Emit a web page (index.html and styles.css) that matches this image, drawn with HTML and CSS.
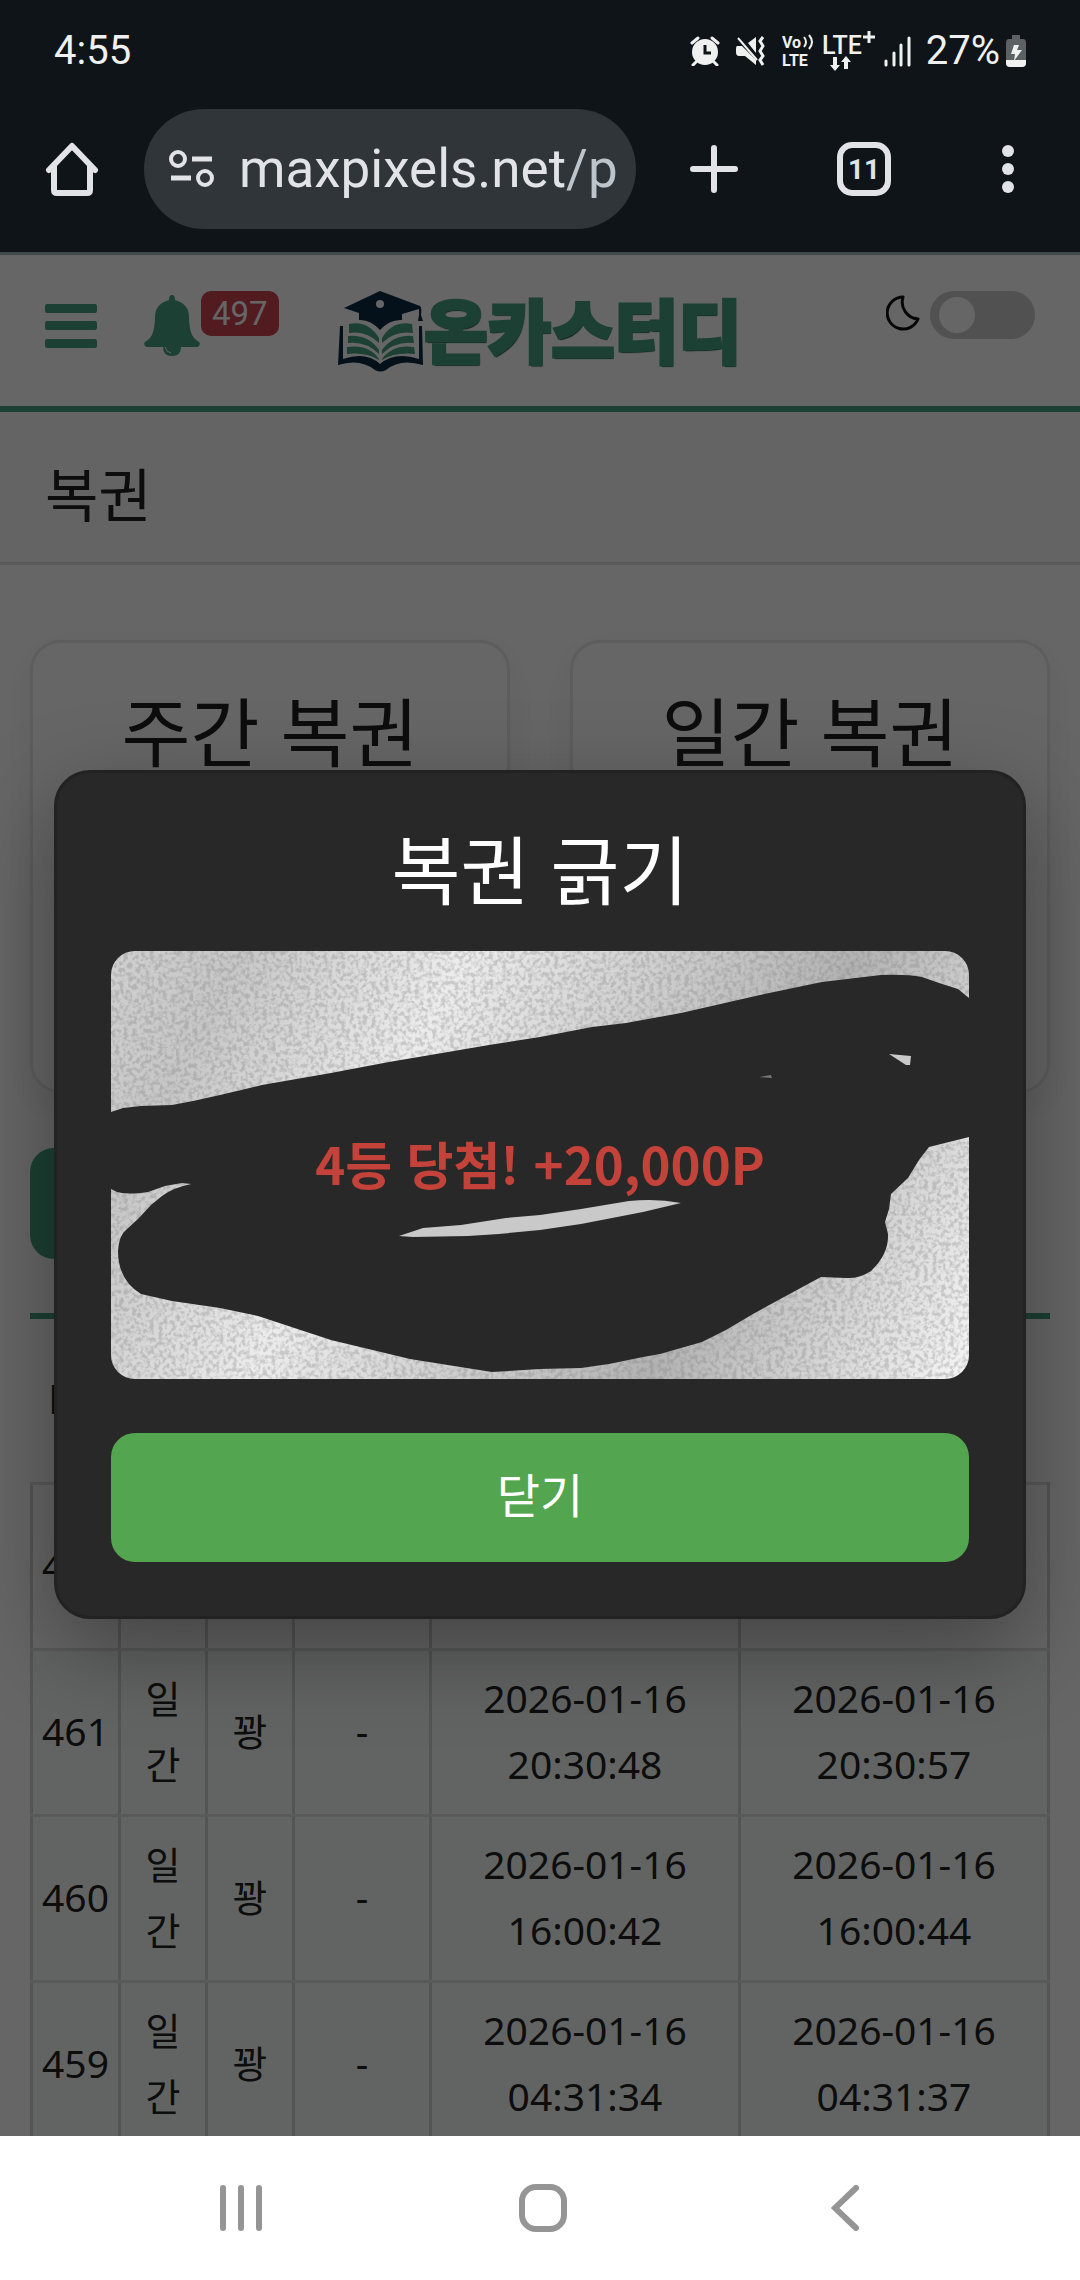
FILE: index.html
```html
<!DOCTYPE html>
<html lang="ko">
<head>
  <meta charset="UTF-8">
  <meta name="viewport" content="width=device-width, initial-scale=1.0">
  <title>복권</title>
  <link rel="stylesheet" href="styles.css">
</head>
<body>
  <div class="statusbar">
    <span class="clock">4:55</span>
    <div class="status-icons">
      <svg class="alarm" width="30" height="30" viewBox="0 0 30 30">
        <circle cx="15" cy="16" r="13" fill="#eff1f0"/>
        <path d="M2 7 L8 2 M28 7 L22 2 M6 26 L3 29 M24 26 L27 29" stroke="#eff1f0" stroke-width="3" stroke-linecap="round"/>
        <path d="M15 9 V17 H21" fill="none" stroke="#0f1418" stroke-width="3"/>
      </svg>
      <svg class="mute" width="32" height="30" viewBox="0 0 32 30">
        <path d="M21 1 V17 L13 7 Z M2 10 H7 L21 24 V29 L10 20 H4 Q1 20 1 16 V13 Q1 10 2 10 Z" fill="#eff1f0"/>
        <path d="M3 2 L22 24" stroke="#eff1f0" stroke-width="2"/>
        <path d="M28 1 L25 5 L28 10 L25 15 L28 20 L25 24 L28 29" fill="none" stroke="#eff1f0" stroke-width="3"/>
      </svg>
      <svg class="volte" width="34" height="36" viewBox="0 0 34 36">
        <text x="0" y="15">Vo</text>
        <text x="0" y="33">LTE</text>
        <path d="M22 4 Q26 9 22 14 M27 2 Q33 9 27 16" fill="none" stroke="#eff1f0" stroke-width="2"/>
      </svg>
      <svg class="lte" width="56" height="44" viewBox="0 0 56 44">
        <text x="0" y="25">LTE</text>
        <path d="M47 2 V14 M41 8 H53" stroke="#eff1f0" stroke-width="3"/>
        <path d="M11 28 H15 V36 H18 L13 42 L8 36 H11 Z M22 40 H26 V33 H29 L24 27 L19 33 H22 Z" fill="#eff1f0"/>
      </svg>
      <svg class="signal" width="28" height="32" viewBox="0 0 28 32">
        <path d="M2 26 V30 M10 18 V30 M17 10 V30 M25 3 V30" stroke="#eff1f0" stroke-width="3" stroke-linecap="round"/>
      </svg>
      <span class="percent">27%</span>
      <svg class="battery" width="20" height="32" viewBox="0 0 20 32">
        <path d="M6 0 H14 V4 H17 Q20 4 20 8 V28 Q20 32 16 32 H4 Q0 32 0 28 V8 Q0 4 3 4 H6 Z" fill="#5d6164"/>
        <path d="M0 25 H20 V28 Q20 32 16 32 H4 Q0 32 0 28 Z" fill="#eff1f0"/>
        <path d="M8 10 H13 L11 15 H16 L8 26 L9 19 H5 Z" fill="#eff1f0"/>
      </svg>
    </div>
  </div>

  <div class="toolbar">
    <button class="tool" aria-label="홈">
      <svg width="54" height="54" viewBox="0 0 54 54">
        <path d="M4 28 L27 4 L50 28 M9 24 V48 Q9 51 12 51 H42 Q45 51 45 48 V24" fill="none" stroke="#e1e3e6" stroke-width="6" stroke-linecap="round" stroke-linejoin="round"/>
      </svg>
    </button>
    <button class="address">
      <svg width="46" height="40" viewBox="0 0 46 40">
        <circle cx="9" cy="10" r="7" fill="none" stroke="#e1e3e6" stroke-width="4"/>
        <circle cx="36" cy="29" r="7" fill="none" stroke="#e1e3e6" stroke-width="4"/>
        <path d="M23 10 H43 M2 29 H22" stroke="#e1e3e6" stroke-width="5"/>
      </svg>
      <span class="url">maxpixels.net<span class="path">/p</span></span>
    </button>
    <button class="tool plus" aria-label="새 탭">
      <svg width="48" height="48" viewBox="0 0 48 48">
        <path d="M24 3 V45 M3 24 H45" stroke="#e1e3e6" stroke-width="6" stroke-linecap="round"/>
      </svg>
    </button>
    <button class="tool tabs">11</button>
    <button class="tool more" aria-label="메뉴">
      <svg width="12" height="48" viewBox="0 0 12 48">
        <circle cx="6" cy="6" r="6" fill="#e1e3e6"/>
        <circle cx="6" cy="24" r="6" fill="#e1e3e6"/>
        <circle cx="6" cy="42" r="6" fill="#e1e3e6"/>
      </svg>
    </button>
  </div>

  <div class="webview">
    <header class="header">
      <div class="header-left">
        <button class="icon-btn menu-btn" aria-label="메뉴 열기">
          <svg width="52" height="44" viewBox="0 0 52 44">
            <path d="M2 0 H50 Q52 0 52 2 V7 Q52 9 50 9 H2 Q0 9 0 7 V2 Q0 0 2 0 Z M2 17 H50 Q52 17 52 19 V24 Q52 26 50 26 H2 Q0 26 0 24 V19 Q0 17 2 17 Z M2 35 H50 Q52 35 52 37 V42 Q52 44 50 44 H2 Q0 44 0 42 V37 Q0 35 2 35 Z" fill="#46a080"/>
          </svg>
        </button>
        <button class="icon-btn bell-btn" aria-label="알림">
          <svg width="56" height="61" viewBox="0 0 56 61">
            <path d="M28 0 Q31 0 31 5 Q45 9 45 22 Q45 33 48 40 Q50 44 55 47 Q57 49 54 52 H37 Q37 61 28 61 Q19 61 19 52 H2 Q-1 49 1 47 Q6 44 8 40 Q11 33 11 22 Q11 9 25 5 Q25 0 28 0 Z" fill="#46a080"/>
            <path d="M21 52 Q22 57 27 58" fill="none" stroke="#fff" stroke-width="1"/>
          </svg>
          <span class="badge">497</span>
        </button>
      </div>
      <a class="logo" href="#">
        <svg width="86" height="81" viewBox="0 0 86 81">
          <path d="M1 35 H5 V68 Q28 60 42 73 Q57 60 81 68 V35 H84 L85 74 Q62 67 48 79 Q42 82 37 79 Q22 67 0 74 L2 35 Z" fill="#0a2841"/>
          <path d="M11 33 Q30 29 41 47 V52 Q28 39 11 42 Z M10 45 Q30 43 41 59 V63 Q28 50 10 52 Z M9 56 Q31 53 41 68 V69 Q28 61 9 63 Z" fill="#46a080"/>
          <path d="M74 33 Q55 29 44 47 V52 Q57 39 75 42 Z M75 45 Q56 43 44 59 V63 Q57 50 76 52 Z M76 56 Q55 53 44 68 V69 Q57 61 77 63 Z" fill="#46a080"/>
          <path d="M42 0 L82 15 Q84 17 83 24 L85 30 H80 L81 24 V18 L64 23 V29 Q52 28 42 39 Q32 28 21 29 V22 L6 17 Z" fill="#0a2841"/>
          <circle cx="42" cy="13" r="4" fill="#fff"/>
        </svg>
        <span class="logo-text">온카스터디</span>
      </a>
      <label class="theme" for="dark">
        <svg width="34" height="36" viewBox="0 0 34 36">
          <path d="M17 2 A16 16 0 1 0 32 24 A17 17 0 0 1 17 2 Z" fill="none" stroke="#111" stroke-width="3" stroke-linejoin="round"/>
        </svg>
        <input type="checkbox" id="dark" aria-label="다크 모드">
      </label>
    </header>

    <h1 class="page-title">복권</h1>

    <main class="content">
      <div class="cards">
        <section class="card"><h2>주간 복권</h2></section>
        <section class="card"><h2>일간 복권</h2></section>
      </div>
      <button class="history-btn" aria-label="내역"></button>
      <div class="list-head">No</div>
      <table class="history">
        <colgroup>
          <col class="col-no">
          <col class="col-type">
          <col class="col-type">
          <col class="col-point">
          <col>
          <col>
        </colgroup>
        <tbody>
          <tr><td>462</td><td class="type">일간</td><td></td><td></td><td></td><td></td></tr>
          <tr><td>461</td><td class="type">일간</td><td>꽝</td><td>-</td><td>2026-01-16 20:30:48</td><td>2026-01-16 20:30:57</td></tr>
          <tr><td>460</td><td class="type">일간</td><td>꽝</td><td>-</td><td>2026-01-16 16:00:42</td><td>2026-01-16 16:00:44</td></tr>
          <tr><td>459</td><td class="type">일간</td><td>꽝</td><td>-</td><td>2026-01-16 04:31:34</td><td>2026-01-16 04:31:37</td></tr>
        </tbody>
      </table>
    </main>

    <div class="overlay">
      <div class="modal" role="dialog" aria-labelledby="modal-title">
        <h2 id="modal-title">복권 긁기</h2>
        <div class="scratch">
          <svg viewBox="0 0 858 428" preserveAspectRatio="none">
            <defs>
              <linearGradient id="silver" gradientUnits="userSpaceOnUse" x1="0" y1="0" x2="858" y2="428">
                <stop offset="0" stop-color="#d0d0d0"/>
                <stop offset="0.12" stop-color="#c6c6c6"/>
                <stop offset="0.33" stop-color="#ececec"/>
                <stop offset="0.7" stop-color="#b2b2b2"/>
                <stop offset="1" stop-color="#f6f6f6"/>
              </linearGradient>
              <filter id="grain" x="0" y="0" width="100%" height="100%">
                <feTurbulence type="fractalNoise" baseFrequency="0.23" numOctaves="2" seed="4"/>
                <feColorMatrix type="matrix" values="0 0 0 0 0.2  0 0 0 0 0.2  0 0 0 0 0.2  4 0 0 0 -1.7"/>
              </filter>
            </defs>
            <rect width="858" height="428" fill="url(#silver)"/>
            <rect width="858" height="428" filter="url(#grain)" opacity="0.3"/>
            <!-- scratched off area -->
            <path fill="#282828" d="M0 161 L12 157 L30 155 L61 154 L82 150 L109 144 L151 134 L220 122 L278 111 L337 101 L378 94 L429 86 L481 76 L515 72 L570 62 L649 44 L711 31 L770 24 Q796 23 811 26 L828 32 L847 38 L858 47
              V186 L834 192 L818 196 L808 209 L797 227 L780 243 L778 258 L774 271 L777 283 Q778 303 760 320 Q748 328 735 327 L710 326 L673 346 L642 363 L615 379 L591 391 L549 403 L532 406 L498 413 L470 417 L429 418 L381 421 L343 415 L299 408 L220 389 L147 365 L109 357 L61 350 L30 343 Q7 329 7 300 Q8 284 16 278 L27 268 L40 254 L51 245 Q61 237 80 233 L71 232 L54 235 L37 241 Q18 244 6 241 L0 238 Z"/>
            <path fill="#c9c9c9" d="M288 285 L312 277 L350 274 L395 267 L429 264 L470 258 L518 250 Q545 247 570 252 L532 261 L470 273 L429 279 L388 283 L357 285 L302 286 Z M778 103 L800 105 L799 114 L795 114 Z"/>
            <path fill="#777" d="M648 126 L660 124 L661 127 Z"/>
          </svg>
          <p class="prize">4등 당첨! +20,000P</p>
        </div>
        <button class="close-btn">닫기</button>
      </div>
    </div>
  </div>

  <nav class="navbar">
    <button aria-label="최근 앱">
      <svg width="42" height="46" viewBox="0 0 42 46">
        <path d="M3 3 V43 M21 3 V43 M39 3 V43" stroke="#959595" stroke-width="6" stroke-linecap="round"/>
      </svg>
    </button>
    <button aria-label="홈 화면">
      <svg width="48" height="48" viewBox="0 0 48 48">
        <rect x="3" y="3" width="42" height="42" rx="14" fill="none" stroke="#959595" stroke-width="6"/>
      </svg>
    </button>
    <button aria-label="뒤로">
      <svg width="28" height="46" viewBox="0 0 28 46">
        <path d="M25 3 L4 23 L25 43" fill="none" stroke="#959595" stroke-width="6" stroke-linecap="round"/>
      </svg>
    </button>
  </nav>
</body>
</html>
```

FILE: styles.css
```css
* {
  box-sizing: border-box;
}
body {
  margin: 0;
  height: 100vh;
  display: flex;
  flex-direction: column;
  overflow: hidden;
  font-family: "Noto Sans", "Noto Sans CJK KR", sans-serif;
  color: #212121;
  background: #fff;
}
button {
  padding: 0;
  border: none;
  background: none;
  font: inherit;
  color: inherit;
  cursor: pointer;
}
svg {
  display: block;
}
h1, h2, p {
  margin: 0;
  font-weight: 400;
}

/* status bar */
.statusbar {
  display: flex;
  justify-content: space-between;
  align-items: center;
  height: 109px;
  padding: 0 54px 8px;
  background: #0f1418;
  color: #eff1f0;
  font-family: Roboto, sans-serif;
  font-size: 40px;
}
.status-icons {
  display: flex;
  align-items: center;
}
.mute {
  margin-left: 15px;
}
.volte {
  margin-left: 15px;
  fill: #eff1f0;
  font-size: 16px;
  font-weight: 700;
}
.lte {
  margin: 0 6px;
  fill: #eff1f0;
  font-size: 25px;
  font-weight: 500;
}
.percent {
  margin: 0 6px 0 14px;
}

/* browser toolbar */
.toolbar {
  display: flex;
  align-items: flex-start;
  height: 146px;
  padding: 0 66px 0 45px;
  background: #0f1418;
  border-bottom: 3px solid #3f484a;
  color: #e1e3e6;
  font-family: Roboto, sans-serif;
}
.tool {
  display: flex;
  align-items: center;
  justify-content: center;
  height: 120px;
}
.address {
  flex: 1;
  min-width: 0;
  display: flex;
  align-items: center;
  height: 120px;
  margin: 0 54px 0 45px;
  padding: 0 20px 0 25px;
  border-radius: 60px;
  background: #303539;
  font-size: 53px;
}
.url {
  flex: 1;
  margin-left: 24px;
  overflow: hidden;
  white-space: nowrap;
  text-align: left;
}
.path {
  color: #bdc4ca;
}
.tabs {
  width: 54px;
  height: 54px;
  margin: 33px 111px 0 99px;
  border: 6px solid #e1e3e6;
  border-radius: 15px;
  font-size: 28px;
  font-weight: 700;
}

/* page */
.webview {
  position: relative;
  flex: 1;
  min-height: 0;
  overflow: hidden;
}
.header {
  display: grid;
  grid-template-columns: 1fr auto 1fr;
  align-items: start;
  height: 157px;
  padding: 36px 45px 0;
  background: #fff;
  border-bottom: 6px solid #46a080;
}
.header-left {
  display: flex;
  align-items: flex-start;
}
.menu-btn {
  padding-top: 13px;
}
.bell-btn {
  display: flex;
  align-items: flex-start;
  margin-left: 47px;
}
.bell-btn svg {
  margin-top: 4px;
}
.badge {
  margin-left: 1px;
  padding: 0 11px;
  border-radius: 10px;
  background: #ca444e;
  color: #fff;
  font-family: Roboto, sans-serif;
  font-size: 33px;
  line-height: 45px;
}
.logo {
  display: flex;
  align-items: flex-start;
  height: 81px;
  text-decoration: none;
}
.logo-text {
  color: #46a080;
  font-family: "Noto Sans CJK KR", sans-serif;
  font-size: 69px;
  font-weight: 900;
  line-height: 75px;
  -webkit-text-stroke: 3px #46a080;
  text-shadow: 1px 2px 1px #1d4a38;
}
.theme {
  display: flex;
  justify-content: flex-end;
  gap: 10px;
}
.theme svg {
  margin-top: 4px;
}
.theme input {
  appearance: none;
  width: 105px;
  height: 48px;
  margin: 0;
  padding: 6px 9px;
  border-radius: 24px;
  background: #cbcbcb;
}
.theme input::before {
  content: "";
  display: block;
  width: 36px;
  height: 36px;
  border-radius: 50%;
  background: #fff;
}
.page-title {
  padding: 10px 45px 0;
  border-bottom: 3px solid #e0e0e0;
  background: #fafafa;
  font-family: "Noto Sans CJK KR", sans-serif;
  font-size: 58px;
  line-height: 140px;
}
.content {
  padding: 75px 30px 0;
}
.cards {
  display: grid;
  grid-template-columns: 1fr 1fr;
  gap: 60px;
}
.card {
  height: 453px;
  padding-top: 46px;
  border: 3px solid #e8e8e8;
  border-radius: 30px;
  box-shadow: 0 12px 36px rgba(0, 0, 0, 0.06);
  text-align: center;
}
.card h2,
.modal h2 {
  font-family: "Noto Sans CJK KR", sans-serif;
  font-size: 75px;
  line-height: 80px;
}
.history-btn {
  display: block;
  width: 50%;
  height: 111px;
  margin: 55px 0 54px;
  border-radius: 24px;
  background: #46a080;
}
.list-head {
  padding: 0 0 6px 18px;
  border-top: 6px solid #46a080;
  font-family: "Noto Sans CJK KR", sans-serif;
  font-size: 39px;
  line-height: 157px;
}
.history {
  width: 100%;
  table-layout: fixed;
  border-collapse: collapse;
  font-size: 39px;
  line-height: 66px;
  text-align: center;
}
.history td {
  height: 166px;
  padding: 13px 6px 17px;
  border: 3px solid #dedede;
  border-left-color: #d2d2d2;
  border-right-color: #d2d2d2;
}
.history tr + tr td {
  background: #f6faf8;
}
.history .type {
  padding-left: 12px;
  padding-right: 12px;
}
.history td:nth-child(2),
.history td:nth-child(3) {
  font-size: 38px;
}
.col-no {
  width: 88px;
}
.col-type {
  width: 87px;
}
.col-point {
  width: 137px;
}

/* modal */
.overlay {
  position: absolute;
  inset: 0;
  display: flex;
  align-items: center;
  justify-content: center;
  padding-bottom: 2px;
  background: rgba(0, 0, 0, 0.6);
}
.modal {
  width: 90%;
  padding: 54px;
  border: 3px solid #222;
  border-radius: 36px;
  background: #282828;
  box-shadow: 0 30px 90px rgba(0, 0, 0, 0.35);
  color: #fff;
  text-align: center;
}
.scratch {
  position: relative;
  margin: 44px 0 54px;
  border-radius: 24px;
  overflow: hidden;
}
.scratch svg {
  width: 100%;
}
.prize {
  position: absolute;
  inset: 0;
  display: flex;
  align-items: center;
  justify-content: center;
  padding-bottom: 4px;
  color: #c3423a;
  font-family: "Noto Sans CJK KR", sans-serif;
  font-size: 51px;
  font-weight: 700;
}
.close-btn {
  display: block;
  width: 100%;
  padding-bottom: 10px;
  border-radius: 24px;
  background: #54a550;
  font-family: "Noto Sans CJK KR", sans-serif;
  font-size: 47px;
  line-height: 119px;
}

/* system navigation */
.navbar {
  display: flex;
  justify-content: center;
  height: 144px;
  padding: 0 84px 0 90px;
  background: #fff;
}
.navbar button {
  flex: 1;
  display: flex;
  align-items: center;
  justify-content: center;
}
```
